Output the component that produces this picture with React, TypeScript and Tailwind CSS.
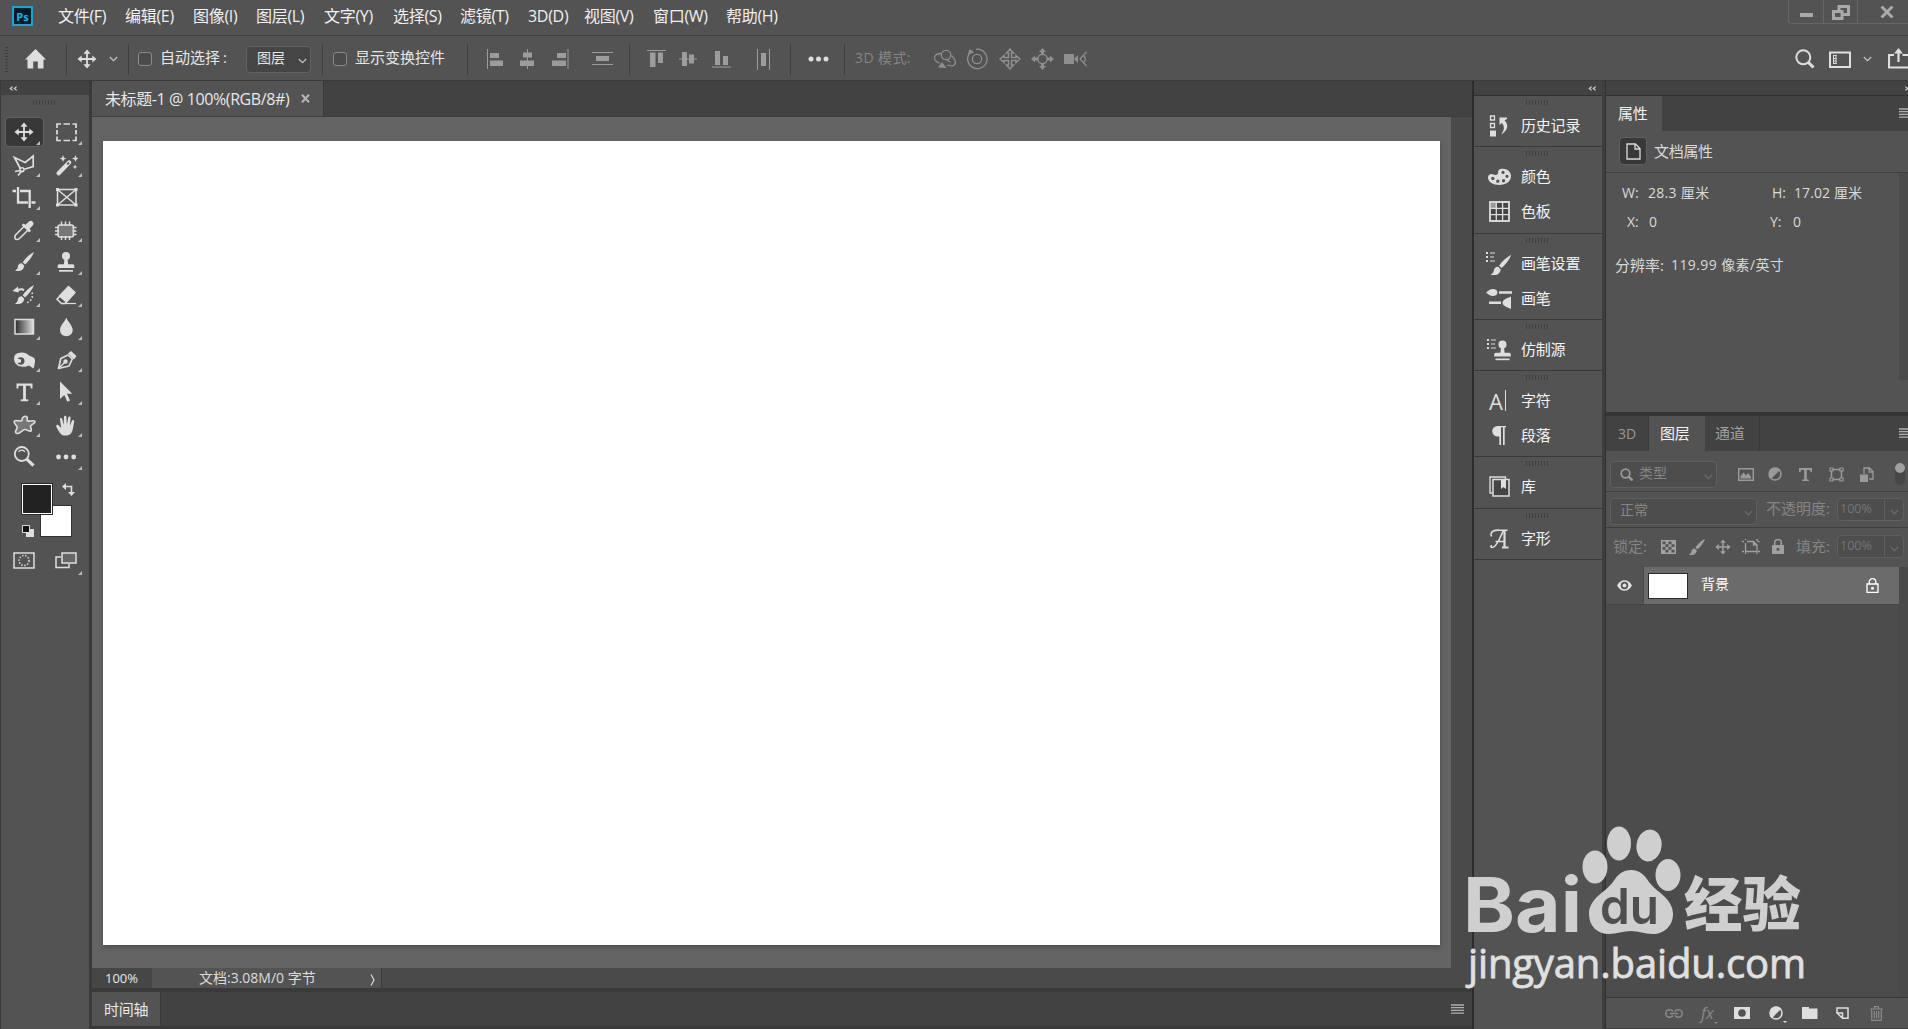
import type { ReactNode } from "react";
import clsx from "clsx";

interface SvgProps {
  w?: number;
  h?: number;
  className?: string;
  children: ReactNode;
}

// outline icon on its own pixel grid
const Svg = ({ w = 24, h = 24, className, children }: SvgProps) => (
  <svg
    width={w}
    height={h}
    viewBox={`0 0 ${w} ${h}`}
    fill="none"
    stroke="currentColor"
    strokeWidth="1.5"
    className={clsx("shrink-0", className)}
  >
    {children}
  </svg>
);

const Solid = ({ w = 24, h = 24, className, children }: SvgProps) => (
  <svg
    width={w}
    height={h}
    viewBox={`0 0 ${w} ${h}`}
    fill="currentColor"
    className={clsx("shrink-0", className)}
  >
    {children}
  </svg>
);

const Chevron = ({ className }: { className?: string }) => (
  <Svg w={9} h={6} className={className}>
    <path d="M.8 1l3.7 3.6L8.200 1" strokeWidth="1.2" />
  </Svg>
);

const MovePath = () => (
  <path d="M12 2.500l3.600 4.200h-2.700v4.400h4.400V8.400L21.500 12l-4.200 3.600v-2.700h-4.400v4.400h2.700L12 21.500l-3.600-4.200h2.700v-4.400H6.700v2.700L2.500 12l4.200-3.600v2.700h4.400V6.700H8.400z" />
);

const BrushPath = () => (
  <>
    <path d="M22 2c-4.500 2.200-8.600 6.300-11.300 10.200l2.400 2.200C16.600 11.200 20.300 6.700 22 2z" />
    <path d="M9.800 13.200c-2.800 0-3.700 1.700-4 3.700-.3 1.800-1.200 2.700-3 3.600 3.600 1.300 8.700.5 9.500-4.800z" />
  </>
);

const StampPath = () => (
  <>
    <circle cx="12" cy="6" r="4" />
    <path d="M10.500 9h3l.6 5.200h4.600c1 0 1.600.8 1.600 1.700V18H3.700v-2.100c0-.9.700-1.700 1.600-1.700h4.600z" />
    <path d="M5 20h14v1.700H5z" />
  </>
);

const Hamburger = ({ className }: { className?: string }) => (
  <Svg w={13} h={10} className={className}>
    <path d="M0 1h13M0 3.700h13M0 6.400h13M0 9.100h13" strokeWidth="1.300" />
  </Svg>
);

const Gripper = () => (
  <Solid w={24} h={5} className="text-[#404040]">
    <path d="M0 0h1v5H0zM3 0h1v5H3zM6 0h1v5H6zM9 0h1v5H9zM12 0h1v5h-1zM15 0h1v5h-1zM18 0h1v5h-1zM21 0h1v5h-1z" />
  </Solid>
);

const Collapse = ({ className }: { className?: string }) => (
  <Solid w={8} h={7} className={className}>
    <path d="M3.600 1v1.500L2.300 3.500l1.300 1V6L.3 3.500zM7.600 1v1.500L6.300 3.500l1.300 1V6L4.300 3.500z" />
  </Solid>
);

/* ---------- menu bar ---------- */

const menus = [
  { label: "文件(F)", width: "w-[67px]" },
  { label: "编辑(E)", width: "w-[68px]" },
  { label: "图像(I)", width: "w-[63px]" },
  { label: "图层(L)", width: "w-[68px]" },
  { label: "文字(Y)", width: "w-[69px]" },
  { label: "选择(S)", width: "w-[67px]" },
  { label: "滤镜(T)", width: "w-[68px]" },
  { label: "3D(D)", width: "w-[56px]" },
  { label: "视图(V)", width: "w-[69px]" },
  { label: "窗口(W)", width: "w-[73px]" },
  { label: "帮助(H)", width: "w-[70px]" },
];

const MenuBar = () => (
  <div className="flex h-[36px] items-start border-b border-[#3d3d3d]">
    <div className="ml-[12px] mt-[6px] flex h-5 w-[21px] items-center justify-center border-2 border-[#1ba3cf] bg-[#001c26] text-[11px] font-bold leading-none text-[#19b4ee]">
      Ps
    </div>
    <div className="ml-[25px] flex h-[32px] items-center text-[16px] tracking-[-0.3px] text-[#f0f0f0]">
      {menus.map((m) => (
        <span key={m.label} className={clsx("whitespace-nowrap", m.width)}>
          {m.label}
        </span>
      ))}
    </div>
    {/* window buttons */}
    <div className="ml-auto flex h-6 w-[120px] rounded-bl border-b border-l border-[#666] text-[#a9a9a9]">
      <div className="flex w-[35px] justify-center border-r border-[#666]">
        <div className="mt-[13px] h-1 w-[13px] bg-[#a9a9a9]" />
      </div>
      <div className="flex w-[34px] justify-center border-r border-[#666]">
        <Svg w={18} h={15} className="mt-[5px]">
          <path d="M7 7V1.500h9.500V9.500H11M1.500 6.500H10v7H1.500z" strokeWidth="3" />
        </Svg>
      </div>
      <Svg w={14} h={12} className="ml-[22px] mt-[6px]">
        <path d="M1.500.5l11 11M12.500.5l-11 11" strokeWidth="3" />
      </Svg>
    </div>
  </div>
);

/* ---------- options bar ---------- */

const Divider = ({ className }: { className: string }) => (
  <div className={clsx("h-[31px] w-px shrink-0 bg-[#3e3e3e]", className)} />
);

const Checkbox = ({ className }: { className: string }) => (
  <div
    className={clsx(
      "h-[14px] w-[14px] shrink-0 rounded-[3px] border border-[#8a8a8a] bg-[#4b4b4b]",
      className,
    )}
  />
);

const OptionsBar = () => (
  <div className="flex h-[44px] items-center whitespace-nowrap pt-[2px] text-[15px] text-[#e6e6e6]">
    <Svg w={3} h={25} className="ml-[5px] text-[#3e3e3e]">
      <path d="M1.500 0v25" strokeWidth="3" strokeDasharray="1 2" />
    </Svg>
    <Solid w={21} h={20} className="ml-[17px] text-[#dedede]">
      <path d="M10.500 0L21 10.600h-2.500V19.500h-5.700v-7H8.200v7H2.500v-8.900H0z" />
    </Solid>
    <Divider className="ml-[20px]" />
    <Solid className="ml-[8px] text-[#dedede]">
      <MovePath />
    </Solid>
    <Chevron className="ml-[10px] text-[#c4c4c4]" />
    <Divider className="ml-[10px]" />
    <Checkbox className="ml-[9px]" />
    <span className="ml-[8px] w-[86px] pb-[3px]">
      自动选择<span className="ml-[3px]">:</span>
    </span>
    <div className="flex h-[27px] w-[65px] items-center rounded border border-[#636363] bg-[#454545] pl-[10px] text-[14px]">
      <span className="w-[41px] pb-[3px]">图层</span>
      <Chevron className="mt-1 text-[#c4c4c4]" />
    </div>
    <Divider className="ml-[11px]" />
    <Checkbox className="ml-[10px]" />
    <span className="ml-[8px] w-[112px] pb-[3px]">显示变换控件</span>
    <Divider className="" />
    <div className="flex w-[161px] items-center text-[#9c9c9c]">
      <Solid w={17} h={20} className="ml-[19px]">
        <path d="M0 0h1v20H0zM3 4h9v5H3zM3 11.500h13v5.500H3z" />
      </Solid>
      <Solid w={15} h={20} className="ml-[16px]">
        <path d="M7 0h1v20H7zM3 3.500h9v5H3zM0 11.500h14v5.500H0z" />
      </Solid>
      <Solid w={17} h={20} className="ml-[17px]">
        <path d="M15.500 0h1v20h-1zM5 4h9v5H5zM0 11.500h14v5.500H0z" />
      </Solid>
      <Solid w={21} h={14} className="ml-[23px]">
        <path d="M0 0h21v1H0zM4 4h13v5H4zM0 12h21v1H0z" />
      </Solid>
    </div>
    <Divider className="" />
    <div className="flex w-[160px] items-center text-[#9c9c9c]">
      <Solid w={19} h={18} className="ml-[17px]">
        <path d="M0 0h19v1H0zM3 2.500h5.500V17H3zM11 2.500h5V13h-5z" />
      </Solid>
      <Solid w={18} h={18} className="ml-[13px]">
        <path d="M0 8.500h18v1H0zM3 2h5v14H3zM10 4.500h5v9h-5z" />
      </Solid>
      <Solid w={19} h={18} className="ml-[15px]">
        <path d="M0 16.500h19v1H0zM3 1h5v14H3zM11 6h5v9h-5z" />
      </Solid>
      <Solid w={13} h={21} className="ml-[26px]">
        <path d="M0 0h1v21H0zM4 4h5v13H4zM12 0h1v21h-1z" />
      </Solid>
    </div>
    <Divider className="" />
    <Solid w={21} h={6} className="ml-[17px] text-[#dedede]">
      <circle cx="3" cy="3" r="2.500" />
      <circle cx="10.500" cy="3" r="2.500" />
      <circle cx="18" cy="3" r="2.500" />
    </Solid>
    <Divider className="ml-[15px]" />
    <span className="ml-[10px] w-[78px] pb-[3px] text-[14px] tracking-[0.4px] text-[#858585]">3D 模式:</span>
    <div className="flex items-center text-[#8f8f8f]">
      <Svg w={24} h={20}>
        <circle cx="13" cy="6" r="4.700" strokeWidth="1.300" />
        <path
          d="M8 4.500C2.500 4.500.5 7.500 2 11c.8 1.600 2.500 2.500 4.500 3.200M18.500 6.500c4 3.500 5.200 8.500 2.300 9.800-2 .8-4.500.5-6.800-.3M14 11l3.500 2"
          strokeWidth="1.300"
        />
        <path d="M5 18.500l4-5.500 4.500 6z" fill="currentColor" stroke="none" />
      </Svg>
      <Svg w={22} h={22} className="ml-[9px]">
        <path d="M6.500 2.500A9.700 9.700 0 1 0 10 1.300M1.500 11.500c0-2 .5-4 1.700-5.500" strokeWidth="1.300" />
        <circle cx="11" cy="11" r="4.700" strokeWidth="1.300" />
        <path d="M2 6.500L3.500 1l4.500 3.500z" fill="currentColor" stroke="none" />
      </Svg>
      <Svg w={22} h={22} className="ml-[11px]">
        <path d="M11 1l3.500 4h-2v4.500H17v-2l4 3.500-4 3.500v-2h-4.500V17h2L11 21l-3.500-4h2v-4.500H5v2L1 11l4-3.500v2h4.500V5h-2z" />
      </Svg>
      <Svg w={23} h={22} className="ml-[10px]">
        <circle cx="11.500" cy="11" r="4.700" />
        <path
          d="M11.500 0l3.500 4h-2v2.500h-3V4H8zM11.500 22L8 18h2v-3h3v3h2zM0 11l4-3.500v2h3v3H4v2zM23 11l-4 3.500v-2h-3v-3h3v-2z"
          fill="currentColor"
          stroke="none"
        />
      </Svg>
      <Svg w={24} h={16} className="ml-[10px]">
        <path d="M0 3h10v10H0zM10 8l4-4v8z" fill="currentColor" stroke="none" />
        <path d="M22.500 1L16 8l6.500 7M19.500 4.500c2.500 2 2.500 5 0 7" strokeWidth="1.200" />
      </Svg>
    </div>
    <div className="ml-auto flex items-center text-[#dedede]">
      <Svg w={20} h={20}>
        <circle cx="8.300" cy="8.300" r="7" strokeWidth="2" />
        <path d="M13 13l5.500 5.500" strokeWidth="3" />
      </Svg>
      <Svg w={22} h={17} className="ml-[14px] mt-[1px]">
        <path d="M1 1.500h20v14.500H1z" strokeWidth="2" />
        <path d="M4.500 4v9M7 4v9M4.500 4.500h3M4.500 7.500h3M4.500 10h3M4.500 12.500h3" strokeWidth="1" />
      </Svg>
      <Chevron className="ml-[12px] text-[#c4c4c4]" />
      <Svg w={20} h={21} className="ml-[16px] mb-[2px]">
        <path d="M6 7H1v12.500h19M14.500 7H20M10.500 14V4" strokeWidth="2.200" />
        <path d="M10.500 0l4.500 5.500H6z" fill="currentColor" stroke="none" />
      </Svg>
    </div>
  </div>
);

/* ---------- toolbox ---------- */

const tools: { name: string; icon: ReactNode; more?: boolean }[] = [
  {
    name: "move",
    icon: (
      <Solid>
        <MovePath />
      </Solid>
    ),
  },
  {
    name: "marquee",
    icon: (
      <Svg>
        <path
          d="M3 8V4h4M18.500 4H22v4M22 16.500v4h-3.500M7 20.500H3v-4M9.500 4H16M9.500 20.500H16M3 10v4.500M22 10v4.500"
          strokeWidth="1.700"
        />
      </Svg>
    ),
  },
  {
    name: "lasso",
    icon: (
      <Svg>
        <path d="M8.300 15.500L2.500 4.500l10.700 5 8-6.500V13.500l-9 2.800" strokeWidth="1.700" />
        <circle cx="10" cy="16.800" r="2" />
        <path d="M3 18.500l5.500-1M8.500 18.500L11.500 18M9 18.800L6 22.500" strokeWidth="1.700" />
      </Svg>
    ),
  },
  {
    name: "wand",
    icon: (
      <Solid>
        <path d="M2.800 19L14 7.700c1.500-1.300 4.300 1.200 3 2.900L6 22c-1.800 1.600-4.600-1.200-3.200-3z" />
        <path d="M9 2l1 2.700 2.500.8L10 6.400 9 9 8 6.400l-2.500-.9L8 4.700zM21.500 2l1 2.700 2.500.8-2.500.9-1 2.600-1-2.600-2.500-.9 2.500-.8zM21 11.500l.7 1.800 1.800.7-1.800.6-.7 1.900-.7-1.900-1.800-.6 1.800-.7z" />
        <path d="M12.700 10.800l1.700-1.700 1.300 1.200-1.800 1.700z" fill="#535353" />
      </Solid>
    ),
  },
  {
    name: "crop",
    icon: (
      <Svg>
        <path d="M6 2v15.500h10M19.500 17.500H23.500M.5 6H4M8 6h9.700v17" strokeWidth="2.300" />
      </Svg>
    ),
  },
  {
    name: "frame",
    more: false,
    icon: (
      <Svg>
        <path d="M3.500 4.500h18.500v15.500H3.500zM3.500 4.500L22 20M22 4.500L3.500 20" />
        <path
          d="M2 3h3v3H2zM20.500 3h3v3h-3zM2 18.500h3v3H2zM20.500 18.500h3v3h-3z"
          fill="currentColor"
          stroke="none"
        />
      </Svg>
    ),
  },
  {
    name: "eyedropper",
    icon: (
      <Svg>
        <path d="M12 8.500L3.500 17c-1.200 1.800-.7 4.500 1 4.500 1.300.2 2.400-.3 3.300-1.200l8-8" strokeWidth="1.600" />
        <path
          d="M9.500 7l2-1.500 2 1.300L17 3.500c2-2 5.800.8 4 3.800l-3.500 3.500 1.500 2-1.700 1.700z"
          fill="currentColor"
          stroke="none"
        />
      </Svg>
    ),
  },
  {
    name: "patch",
    icon: (
      <Svg>
        <rect x="4" y="7" width="15.500" height="12" rx="2" fill="#777" />
        <path d="M7.500 3.500V8M11.500 3.500V8M15.500 3.500V8M7.500 18v4M11.500 18v4M15.500 18v4M1 9.500h4M1 13h4M1 16.500h4M18.500 9.500h4M18.500 13h4M18.500 16.500h4" />
      </Svg>
    ),
  },
  {
    name: "brush",
    icon: (
      <Solid>
        <BrushPath />
      </Solid>
    ),
  },
  {
    name: "stamp",
    icon: (
      <Solid>
        <StampPath />
      </Solid>
    ),
  },
  {
    name: "history-brush",
    icon: (
      <Solid>
        <BrushPath />
        <path d="M.5 8L6 3.500l.3 2.300c2.500-.9 5-.6 6.200.7l-1 1.500C10 7 8 7 6.600 8v1.500z" />
        <path
          d="M20 9.500c1.300 4.500-.5 8.500-5.500 10.500"
          fill="none"
          stroke="currentColor"
          strokeWidth="1.600"
          strokeDasharray="1.600 2"
        />
      </Solid>
    ),
  },
  {
    name: "eraser",
    icon: (
      <Svg>
        <path
          d="M14.500 3.500l6.500 6-8.500 9.500L5.500 13z"
          fill="currentColor"
          stroke="currentColor"
          strokeLinejoin="round"
        />
        <path d="M6 13l-3 3.300 4.500 4.200H11l2-2.500" strokeWidth="1.600" />
        <path d="M7 20.500h15" strokeWidth="1.200" />
      </Svg>
    ),
  },
  {
    name: "gradient",
    icon: (
      <Svg>
        <defs>
          <linearGradient id="ramp">
            <stop offset="0" stopColor="#2b2b2b" />
            <stop offset="1" stopColor="#dedede" />
          </linearGradient>
        </defs>
        <rect x="3" y="4.500" width="18.500" height="14.500" fill="url(#ramp)" />
      </Svg>
    ),
  },
  {
    name: "blur",
    icon: (
      <Solid>
        <path d="M12.300 2.500c1.200 4 6.400 8 6.400 12.500 0 3.800-2.900 6.200-6.400 6.200S6 18.800 6 15c0-4.500 5.100-8.500 6.300-12.500z" />
      </Solid>
    ),
  },
  {
    name: "sponge",
    icon: (
      <Solid>
        <path
          fillRule="evenodd"
          d="M3 7c4-3.500 11-3 14 .5 2.500 1 6 2 6 4.500 0 2-.5 6-1.500 8.500L17 17.500c-4 2-10 1.500-12.500-1-2-2-3.500-6-1.500-9.500zm5.800 2.300a3.700 3.700 0 1 0 0 7.400 3.700 3.700 0 0 0 0-7.400z"
        />
        <path d="M3 10l6 1.500v3L4 15z" />
      </Solid>
    ),
  },
  {
    name: "pen",
    icon: (
      <Svg>
        <path d="M4.500 20.500l2.300-10 7.200-3.500 4.300 4-3.300 7z" strokeLinejoin="round" strokeWidth="1.700" />
        <path d="M5 20l6-6" />
        <circle cx="11.500" cy="13.500" r="1.500" fill="currentColor" />
        <path d="M14 5.500L17 3l5.500 5-2.500 3.500z" fill="currentColor" stroke="none" />
      </Svg>
    ),
  },
  {
    name: "type",
    icon: (
      <Solid>
        <path d="M4.500 3.500h16V8.500h-1.700l-.5-2.700h-4.400v13.400l2.400.4v1.600H8.700v-1.600l2.400-.4V5.800H6.700l-.5 2.700H4.500z" />
      </Solid>
    ),
  },
  {
    name: "select",
    icon: (
      <Solid>
        <path d="M6 1.500l12.300 12.300h-5.300l3 6.700-2.700 1.200-3-6.800L6 19z" />
      </Solid>
    ),
  },
  {
    name: "shape",
    icon: (
      <Svg>
        <path
          d="M10 7.500C9.500 4.500 13 2 15 4c1 1.500-.5 3.500.4 4 1.500.6 6.800-1.300 7.600.5.700 2-4.500 3-4.500 5 .2 1.700 1.500 3 .5 4.500-2 1.200-4-2-6.500-1.500-2.500.6-4.500 4.700-7.500 4-3.500-1 .3-4.500.2-6.300C5 12 1 10.500 2.500 8 4 6 9 9.500 10 7.500z"
          fill="#777"
          strokeWidth="1.600"
        />
      </Svg>
    ),
  },
  {
    name: "hand",
    icon: (
      <Solid>
        <path d="M8 22c-2.500-1.800-4.500-6-5.700-8.300-.7-1.700 1.200-2.500 2.300-1.400l2.600 2.600L6 6.500c-.1-1.700 2-1.900 2.300-.3L9.600 12l.4-8c.1-1.700 2.300-1.700 2.400 0l.5 8 1.300-7.500c.3-1.600 2.500-1.300 2.400.3L16 12.700l2-5c.6-1.400 2.500-.8 2.200.7-.8 3.600-.9 8.600-3 11.800-1.800 2.400-6.200 2.800-9.200 1.800z" />
      </Solid>
    ),
  },
  {
    name: "zoom",
    more: false,
    icon: (
      <Svg>
        <circle cx="9.800" cy="9" r="7" strokeWidth="1.800" />
        <path d="M6.500 7c1.500-2.500 5-2.500 6.500 0" strokeWidth="1.200" />
        <path d="M15 14.300l6.500 6.400" strokeWidth="3.200" />
      </Svg>
    ),
  },
  {
    name: "more",
    icon: (
      <Solid>
        <circle cx="4.500" cy="12" r="2.400" />
        <circle cx="12" cy="12" r="2.400" />
        <circle cx="19.700" cy="12" r="2.400" />
      </Solid>
    ),
  },
];

const Corner = () => (
  <Solid w={4} h={4} className="absolute bottom-[4px] right-[5px] text-[#bdbdbd]">
    <path d="M4 0v4H0z" />
  </Solid>
);

const Toolbox = () => (
  <div className="flex w-[92px] shrink-0 flex-col border-l border-r-[3px] border-[#3a3a3a] bg-[#535353]">
    <div className="flex h-[14px] items-center bg-[#424242] pl-[8px] text-[#d0d0d0]">
      <Collapse />
    </div>
    <div className="flex h-[21px] items-center justify-center">
      <div className="mb-[7px]">
        <Gripper />
      </div>
    </div>
    <div className="ml-[2px] grid w-[84px] grid-cols-2 auto-rows-[32.5px] text-[#dedede]">
      {tools.map((t, i) => (
        <div key={t.name} className="relative flex items-center justify-center">
          <div
            className={clsx(
              "flex h-[30px] w-[39px] items-center justify-center rounded-sm",
              i === 0 && "border border-[#616161] bg-[#383838]",
            )}
          >
            {t.icon}
          </div>
          {t.more !== false && <Corner />}
        </div>
      ))}
    </div>
    {/* foreground / background colors */}
    <div className="relative ml-[20px] mt-[9px] h-[54px] w-[54px]">
      <div className="absolute bottom-0 right-[3px] box-content h-[30px] w-[30px] border border-[#333] bg-white" />
      <div className="absolute left-0 top-0 h-8 w-8 border border-[#2a2a2a] bg-white p-px">
        <div className="h-full w-full bg-[#222]" />
      </div>
      <Svg w={13} h={13} className="absolute right-0 top-0 text-[#dedede]">
        <path d="M2 3.500h7.500V11" strokeWidth="1.600" />
        <path d="M0 3.500L4 0v7zM9.500 13L6 9h7z" fill="currentColor" stroke="none" />
      </Svg>
      <Svg w={12} h={12} className="absolute bottom-0 left-[1px]">
        <path d="M4 4h8v8H4z" fill="#dedede" stroke="none" />
        <path d="M.5.5h7v7h-7z" fill="#111" stroke="#dedede" strokeWidth="1" />
      </Svg>
    </div>
    <div className="ml-[2px] mt-[8px] grid h-[32px] w-[84px] grid-cols-2 text-[#dedede]">
      <div className="flex items-center justify-center">
        <Svg w={22} h={17}>
          <path d="M1 1h20v15H1z" />
          <circle cx="11" cy="8.500" r="5" strokeDasharray="1.500 1.500" />
        </Svg>
      </div>
      <div className="relative flex items-center justify-center">
        <Svg w={22} h={17}>
          <path d="M7 1h14v10H7z" fill="#666" />
          <path d="M6 5H1v10.500h13V12" />
        </Svg>
        <Solid w={4} h={4} className="absolute bottom-[2px] right-[5px] text-[#bdbdbd]">
          <path d="M4 0v4H0z" />
        </Solid>
      </div>
    </div>
  </div>
);

/* ---------- document window ---------- */

const DocumentArea = () => (
  <div className="flex w-[1380px] shrink-0 flex-col bg-[#3a3a3a] text-[#e8e8e8]">
    <div className="flex h-[36px] border-b border-[#3d3d3d] bg-[#424242]">
      <div className="flex w-[232px] items-center whitespace-nowrap border-r border-[#3a3a3a] bg-[#535353] pl-[13px] text-[16px]">
        <span className="w-[196px] tracking-[-0.4px]">未标题-1 @ 100%(RGB/8#)</span>
        <Svg w={9} h={9} className="text-[#b5b5b5]">
          <path d="M1 .8l7 7.500M8 .8L1 8.300" strokeWidth="2" />
        </Svg>
      </div>
    </div>
    <div className="flex h-[851px]">
      <div className="w-[1359px] bg-[#646464] pl-[11px] pt-[24px]">
        <div className="h-[804px] w-[1337px] bg-white shadow-[0_2px_5px_#4c4c4c]" />
      </div>
      <div className="w-[21px] bg-[#4a4a4a]" />
    </div>
    <div className="flex h-5 items-center bg-[#4a4a4a]">
      <div className="flex h-full w-[60px] items-center bg-[#464646] pl-[13px] text-[13px]">100%</div>
      <div className="flex h-full w-[230px] items-center whitespace-nowrap border-r border-[#3d3d3d] bg-[#535353] pl-[47px] text-[14px] text-[#dcdcdc]">
        <span className="w-[171px]">文档:3.08M/0 字节</span>
        <Svg w={6} h={12} className="mt-1">
          <path d="M1 .5L4 6 1 11.500" strokeWidth="1.200" />
        </Svg>
      </div>
    </div>
    <div className="mt-1 flex h-[36px] border-b-2 border-[#3a3a3a] bg-[#424242]">
      <div className="flex w-[69px] items-center border-r border-[#3a3a3a] bg-[#535353] pl-[12px] text-[15px] tracking-[-0.3px]">
        时间轴
      </div>
      <Hamburger className="ml-auto mr-[8px] mt-[12px] text-[#b0b0b0]" />
    </div>
  </div>
);

/* ---------- collapsed panel column ---------- */

const ListDots = () => (
  <path d="M0 0h2v2H0zM0 4h2v2H0zM0 8h2v2H0zM4 .5h5v1H4zM4 4.500h4v1H4zM4 8.500h5v1H4z" />
);

interface Group {
  height: string;
  items: { label: string; icon: ReactNode }[];
}

const groups: Group[] = [
  {
    height: "h-[51px]",
    items: [
      {
        label: "历史记录",
        icon: (
          <Svg w={20} h={22}>
            <path d="M1.500 1h4v4h-4zM1.500 8.500h4v4h-4z" strokeWidth="1.300" />
            <path d="M1 15.500h6v6H1z" fill="currentColor" stroke="none" />
            <path
              d="M10.500 2.500h7.500v1.500l-2.500 1.300c4.500 4.500 3.500 10.500-3.500 14.200 3.500-4.500 4-8 .8-11.500L10.500 10z"
              fill="currentColor"
              stroke="none"
            />
          </Svg>
        ),
      },
    ],
  },
  {
    height: "h-[87px]",
    items: [
      {
        label: "颜色",
        icon: (
          <Solid w={23} h={18}>
            <path
              fillRule="evenodd"
              d="M12 1c6-1.500 11 2 11 7 0 5.500-5 9-11.500 9S0 14 0 9.500C0 6.500 3 5 5.500 6.500c2 1 4.500.5 4.500-1.500 0-1.500.5-3.500 2-4zM4.800 8.700a1.700 1.700 0 1 0 0 3.400 1.700 1.700 0 0 0 0-3.400zm5 2.800a1.700 1.700 0 1 0 0 3.400 1.700 1.700 0 0 0 0-3.400zm5.700-.5a1.700 1.700 0 1 0 0 3.400 1.700 1.700 0 0 0 0-3.400zm3.500-4.300a1.600 1.600 0 1 0 0 3.200 1.600 1.600 0 0 0 0-3.200zM15 2.800A1.600 1.600 0 1 0 15 6a1.600 1.600 0 0 0 0-3.200z"
            />
          </Solid>
        ),
      },
      {
        label: "色板",
        icon: (
          <Svg w={21} h={21}>
            <path d="M1 1h19v19H1z" fill="#444" />
            <path d="M1 1h6v6H1z" fill="#999" stroke="none" />
            <path d="M1 1h19v19H1zM7.300 1v19M13.600 1v19M1 7.300h19M1 13.600h19" strokeWidth="1.300" />
          </Svg>
        ),
      },
    ],
  },
  {
    height: "h-[86px]",
    items: [
      {
        label: "画笔设置",
        icon: (
          <Solid w={26} h={23}>
            <ListDots />
            <g transform="translate(1.500 .5) scale(1.080)">
              <BrushPath />
            </g>
          </Solid>
        ),
      },
      {
        label: "画笔",
        icon: (
          <Solid w={26} h={20}>
            <path d="M0 3.500C3 1 4.500 0 7 0c2.500 0 4.500 1.500 4.500 3.500S9.500 7 7 7C4.500 7 3 6 0 3.500zM13 2.200h13v2.600H13zM3 12.500h12v2.600H3zM16.500 13.800C17 10 21 9.500 25 7.500v12.500c-4-2-8-2.500-8.500-6.200z" />
          </Solid>
        ),
      },
    ],
  },
  {
    height: "h-[51px]",
    items: [
      {
        label: "仿制源",
        icon: (
          <Solid w={25} h={22}>
            <ListDots />
            <g transform="translate(3.500 -.5)">
              <StampPath />
            </g>
          </Solid>
        ),
      },
    ],
  },
  {
    height: "h-[86px]",
    items: [
      {
        label: "字符",
        icon: (
          <div className="flex w-[20px] items-center text-[22px] leading-none">
            A<div className="ml-[2px] h-[21px] w-[1.5px] shrink-0 bg-[#dedede]" />
          </div>
        ),
      },
      {
        label: "段落",
        icon: (
          <Solid w={14} h={19}>
            <path d="M5.500 0H14v1.200h-1.300V19h-1.700V1.200H9V19H7.300V10.500H5.500a5.200 5.200 0 1 1 0-10.500z" />
          </Solid>
        ),
      },
    ],
  },
  {
    height: "h-[52px]",
    items: [
      {
        label: "库",
        icon: (
          <Svg w={21} h={21}>
            <path d="M3.500 17H1V1h15.500v2" strokeWidth="1.300" />
            <path d="M4 3.500h16v16.500H4z" fill="#444" />
            <path d="M12 4h5v9l-2.500-2L12 13z" fill="currentColor" stroke="none" />
          </Svg>
        ),
      },
    ],
  },
  {
    height: "h-[51px]",
    items: [
      {
        label: "字形",
        icon: (
          <Svg w={19} h={20}>
            <path d="M1.500 7.500C-.5 2 5 1 9 1.200h8.500M13.500 1.500C11 6 7 18 2.500 18.500c-2 .2-2-2-.5-2M5.500 12.500h9" strokeWidth="1.600" />
            <path d="M14.500 1.500V18M12 18.500h6.500" strokeWidth="2.200" />
          </Svg>
        ),
      },
    ],
  },
];

const IconPanels = () => (
  <div className="flex w-[133px] shrink-0 flex-col border-l-2 border-r-[3px] border-l-[#2c2c2c] border-r-[#3e3e3e] bg-[#535353]">
    <div className="flex h-[15px] items-center justify-end border-b border-[#303030] bg-[#424242] pr-[6px] text-[#d0d0d0]">
      <Collapse />
    </div>
    {groups.map((g) => (
      <div
        key={g.items[0].label}
        className={clsx("flex flex-col items-center border-b border-[#3a3a3a] pt-[4px]", g.height)}
      >
        <div className="mb-[3px]">
          <Gripper />
        </div>
        {g.items.map((item) => (
          <div key={item.label} className="flex h-[35px] w-full shrink-0 items-center text-[#dedede]">
            <div className="ml-[10px] flex w-[30px] items-center justify-center">{item.icon}</div>
            <span className="ml-[7px] pb-px text-[15px] tracking-[-0.2px] text-[#f4f4f4]">
              {item.label}
            </span>
          </div>
        ))}
      </div>
    ))}
  </div>
);

/* ---------- right side panels ---------- */

const Properties = () => (
  <div className="flex h-[316px] flex-col whitespace-nowrap text-[14px] text-[#dadada]">
    <div className="flex h-[35px] bg-[#424242]">
      <div className="flex w-[56px] items-center bg-[#535353] pl-[12px] pb-px text-[15px] tracking-[-0.3px] text-[#f4f4f4]">
        属性
      </div>
      <Hamburger className="-mr-1 ml-auto mt-[12px] text-[#b0b0b0]" />
    </div>
    <div className="flex h-[42px] items-center border-b border-[#3e3e3e] pl-[13px] pb-px text-[15px]">
      <div className="flex h-[28px] w-[28px] items-center justify-center rounded-sm border border-[#606060] bg-[#383838]">
        <Svg w={15} h={17}>
          <path d="M1 1h8.500L14 5.500V16H1zM9 1v5h5" strokeWidth="1.300" />
        </Svg>
      </div>
      <span className="ml-[7px] tracking-[-0.3px]">文档属性</span>
    </div>
    <div className="flex h-[207px]">
      <div className="w-[293px] pt-[10px]">
        <div className="flex h-5 items-center">
          <span className="w-[42px] pl-[16px]">W:</span>
          <span className="w-[124px] tracking-[0.3px]">28.3 厘米</span>
          <span className="w-[22px]">H:</span>
          <span className="tracking-[0.1px]">17.02 厘米</span>
        </div>
        <div className="mt-[9px] flex h-5 items-center">
          <span className="w-[43px] pl-[21px]">X:</span>
          <span className="w-[121px]">0</span>
          <span className="w-[23px]">Y:</span>
          <span>0</span>
        </div>
        <div className="mt-[23px] flex h-5 items-center pl-[9px]">
          <span className="w-[56px] text-[15px]">分辨率:</span>
          <span className="tracking-[0.4px]">119.99 像素/英寸</span>
        </div>
      </div>
      <div className="flex-1 bg-[#4a4a4a]" />
    </div>
  </div>
);

const Percent = () => (
  <div className="ml-auto mr-[4px] flex h-[23px] w-[67px] items-center rounded-sm border border-[#5f5f5f] bg-[#4d4d4d] text-[12.5px] text-[#757575]">
    <span className="flex h-full w-[47px] items-center border-r border-[#5f5f5f] pl-[2px] pb-px">100%</span>
    <Chevron className="ml-[5px] mt-1 text-[#6c6c6c]" />
  </div>
);

const Layers = () => (
  <div className="flex flex-1 flex-col whitespace-nowrap border-t-4 border-[#363636] text-[15px] text-[#a0a0a0]">
    <div className="flex h-[35px] bg-[#424242]">
      <div className="flex w-[43px] items-center border-r border-[#393939] pl-[12px] text-[14px] text-[#989898]">3D</div>
      <div className="flex w-[56px] items-center bg-[#535353] pl-[11px] tracking-[-0.3px] text-[#f4f4f4]">图层</div>
      <div className="flex w-[55px] items-center border-r border-[#393939] pl-[10px] tracking-[-0.3px]">通道</div>
      <Hamburger className="-mr-1 ml-auto mt-[12px] text-[#b0b0b0]" />
    </div>
    {/* filter */}
    <div className="flex h-[41px] items-center border-b border-[#3e3e3e] pl-[4px] pt-[9px] pb-[3px] text-[#9a9a9a]">
      <div className="mt-px flex h-[27px] w-[107px] items-center rounded border border-[#5f5f5f] bg-[#4d4d4d] pl-[9px] text-[14px] text-[#858585]">
        <Svg w={13} h={13} className="text-[#9a9a9a]">
          <circle cx="5.500" cy="5.500" r="4.300" strokeWidth="1.700" />
          <path d="M8.500 8.500l4 4" strokeWidth="2.300" />
        </Svg>
        <span className="ml-[6px] w-[65px] pb-[3px]">类型</span>
        <Chevron className="mt-1 text-[#6c6c6c]" />
      </div>
      <Svg w={16} h={13} className="ml-[21px]">
        <path d="M.7.7h14.600v11.600H.7z" />
        <path d="M2.500 10.500V8.500l3-4 2.500 3 2-2.500 3 4v1.500z" fill="currentColor" stroke="none" />
      </Svg>
      <Svg w={14} h={14} className="ml-[14px]">
        <circle cx="7" cy="7" r="6" />
        <path d="M2.800 11.200A6 6 0 0 1 11.200 2.800z" fill="currentColor" />
      </Svg>
      <Solid w={13} h={13} className="ml-[17px]">
        <path d="M0 0h13v4h-1.500L11 2H7.800v9.300l2 .4V13H3.200v-1.300l2-.4V2H2L1.500 4H0z" />
      </Solid>
      <Svg w={15} h={15} className="ml-[17px]">
        <path d="M2.500 2.500h10v10h-10z" />
        <path d="M1 1h3v3H1zM11 1h3v3h-3zM1 11h3v3H1zM11 11h3v3h-3z" fill="#535353" strokeWidth="1.200" />
      </Svg>
      <Svg w={14} h={15} className="ml-[16px]">
        <path d="M4 7V1h5.500L13 4.500V12H9M9 1v4h4" strokeWidth="1.300" />
        <path d="M0 7.500h8V15H0z" fill="currentColor" stroke="none" />
      </Svg>
      <div className="ml-[21px] h-[22px] w-[10px] rounded-full bg-[#474747]">
        <div className="h-[10px] w-[10px] rounded-full bg-[#a0a0a0]" />
      </div>
    </div>
    {/* blend mode */}
    <div className="flex h-[36px] items-center border-b border-[#3e3e3e] pl-[4px] text-[#858585]">
      <div className="mt-[3px] flex h-[27px] w-[147px] items-center rounded border border-[#5f5f5f] bg-[#4d4d4d] pl-[9px] text-[14px]">
        <span className="w-[124px] pb-[3px]">正常</span>
        <Chevron className="mt-1 text-[#6c6c6c]" />
      </div>
      <span className="ml-[9px] pb-[3px]">不透明度:</span>
      <Percent />
    </div>
    {/* lock row */}
    <div className="flex h-[39px] items-center pb-[2px] pl-[7px] text-[#a0a0a0]">
      <span className="w-[48px] text-[#858585]">锁定:</span>
      <Solid w={15} h={14}>
        <path
          fillRule="evenodd"
          d="M0 0h15v14H0zM1.500 1.500v2.700h3V1.500zM7.500 1.500v2.700h3V1.500zM4.500 4.200v2.800h3V4.200zM10.500 4.200v2.800h3V4.200zM1.500 7v2.700h3V7zM7.500 7v2.700h3V7zM4.500 9.700v2.800h3V9.700zM10.500 9.700v2.800h3V9.700z"
        />
      </Solid>
      <svg viewBox="2 1 21 21" fill="currentColor" className="ml-[12px] h-[18px] w-[18px]">
        <BrushPath />
      </svg>
      <svg viewBox="2 2 20 20" fill="currentColor" className="ml-[9px] h-[16px] w-[16px]">
        <MovePath />
      </svg>
      <Svg w={18} h={15} className="ml-[11px]">
        <path d="M0 2.500h2M3.500 0v1M5 2.500h6.500L15 6v6.500H3.500V4M11.500 2.500V6H15M15 0v2M17.500 2.500h-2M0 12.500h2M3.500 13.500V15M15 13.500V15M16 12.500h2" strokeWidth="1.300" />
      </Svg>
      <Svg w={12} h={15} className="ml-[12px]">
        <path d="M2.700 6V3.800a3.300 3.300 0 0 1 6.600 0V6" />
        <path fillRule="evenodd" d="M0 6h12v9H0zM6 8.700a1.500 1.500 0 1 0 0 3 1.500 1.500 0 0 0 0-3z" fill="currentColor" stroke="none" />
      </Svg>
      <span className="ml-[12px] text-[#858585]">填充:</span>
      <Percent />
    </div>
    {/* background layer */}
    <div className="flex min-h-0 flex-1 bg-[#4c4c4c]">
      <div className="w-[293px]">
        <div className="flex h-[38px] border-b border-[#444] bg-[#535353] text-[#dedede]">
          <div className="flex w-[38px] items-center justify-center border-r border-[#474747]">
            <Solid w={15} h={11}>
              <path
                fillRule="evenodd"
                d="M0 5.500C3.500-1.500 11.500-1.500 15 5.500c-3.500 7-11.500 7-15 0zM7.500 1.800a3.700 3.700 0 1 0 0 7.400 3.700 3.700 0 0 0 0-7.400z"
              />
              <circle cx="7.500" cy="5.500" r="2" />
            </Solid>
          </div>
          <div className="flex flex-1 items-center bg-[#6b6b6b] pl-[4px] text-[14px] text-white">
            <div className="h-[26px] w-[40px] border border-[#2c2c2c] bg-white" />
            <span className="ml-[13px] pb-[3px]">背景</span>
            <Svg w={13} h={15} className="ml-auto mr-[20px]">
              <path d="M1 6h11v8.300H1zM3.200 6V4a3.300 3.300 0 0 1 6.600 0v2" strokeWidth="1.300" />
              <circle cx="6.500" cy="10.200" r="1.500" fill="currentColor" stroke="none" />
            </Svg>
          </div>
        </div>
      </div>
      <div className="flex-1 bg-[#494949]" />
    </div>
    {/* panel actions */}
    <div className="flex h-[32px] items-center border-y border-[#3a3a3a] bg-[#535353] pl-[59px] text-[#dedede]">
      <Svg w={18} h={9} className="text-[#8a8a8a]">
        <path d="M8 2.500C7.300 1.300 6 .8 4.500.8a3.700 3.700 0 0 0 0 7.400C6 8.200 7.300 7.700 8 6.500M10 2.500C10.700 1.300 12 .8 13.500.8a3.700 3.700 0 0 1 0 7.400c-1.500 0-2.800-.5-3.500-1.700M5 4.500h8" />
      </Svg>
      <div className="ml-[18px] flex w-[20px] items-end text-[#8a8a8a]">
        <span className="text-[16px] italic">fx</span>
        <Solid w={4} h={2} className="mb-[-3px]">
          <path d="M0 0h4L2 2z" />
        </Solid>
      </div>
      <Solid w={16} h={12} className="ml-[13px]">
        <path fillRule="evenodd" d="M0 0h16v12H0zM8 2.200a3.800 3.800 0 1 0 0 7.600 3.800 3.800 0 0 0 0-7.600z" />
      </Solid>
      <Svg w={19} h={20} className="ml-[19px]">
        <circle cx="7" cy="10" r="6" />
        <path d="M2.800 14.200A6 6 0 0 1 11.200 5.800z" fill="currentColor" />
        <path d="M14 18h4l-2 2z" fill="currentColor" stroke="none" />
      </Svg>
      <Solid w={16} h={12} className="ml-[14px]">
        <path d="M0 0h7v1.500h8.500V12H0z" />
      </Solid>
      <Svg w={13} h={12} className="ml-[18px]">
        <path d="M1 6V1h11v10.300H6.500L1 6h5.500v5" />
      </Svg>
      <Svg w={13} h={15} className="ml-[21px] text-[#8a8a8a]">
        <path d="M0 3h13M4.500 3V.7h4V3M1.700 3v11.300h9.600V3M4.300 5v7.500M6.500 5v7.500M8.700 5v7.500" strokeWidth="1.200" />
      </Svg>
    </div>
  </div>
);

const Watermark = () => (
  <svg
    width="350"
    height="170"
    viewBox="1460 822 350 170"
    className="absolute left-[1460px] top-[822px]"
    fill="#cfcfcf"
  >
    <text
      x="1463"
      y="932"
      fontSize="76"
      fontWeight="700"
      textLength="119"
      lengthAdjust="spacingAndGlyphs"
      className="font-['Inter','Liberation_Sans',sans-serif]"
    >
      Bai
    </text>
    <ellipse cx="1595" cy="867" rx="12.500" ry="16.500" />
    <ellipse cx="1619" cy="843.500" rx="12" ry="17" />
    <ellipse cx="1649" cy="845.500" rx="12.500" ry="16" transform="rotate(10 1649 845.500)" />
    <ellipse cx="1668" cy="875" rx="12.500" ry="16" />
    <path d="M1631 870c8 0 13 4 18 12 7 10 24 16 24 32 0 12-9 20-20 20-9 0-14-3-22-3s-14 3-22 3c-12 0-20-8-20-20 0-16 17-22 24-32 5-8 10-12 18-12z" />
    <text
      x="1600"
      y="924"
      fontSize="49"
      fontWeight="600"
      fill="#4f4f4f"
      textLength="59"
      lengthAdjust="spacingAndGlyphs"
      className="font-['Inter','Liberation_Sans',sans-serif]"
    >
      du
    </text>
    <text
      x="1684"
      y="926"
      fontSize="59"
      fontWeight="900"
      textLength="117"
      lengthAdjust="spacingAndGlyphs"
      className="font-['Noto_Sans_CJK_SC',sans-serif]"
    >
      经验
    </text>
    <text
      x="1468"
      y="977.500"
      fontSize="40"
      fill="#e0e0e0"
      stroke="#e0e0e0"
      strokeWidth=".8"
      textLength="338"
      className="font-['Open_Sans',sans-serif]"
    >
      jingyan.baidu.com
    </text>
  </svg>
);

export default function App() {
  return (
    <div className="relative flex h-[1029px] w-[1908px] flex-col overflow-hidden bg-[#535353] font-['Open_Sans','Noto_Sans_CJK_SC',sans-serif] leading-none">
      <MenuBar />
      <OptionsBar />
      <div className="flex h-[949px] border-t border-[#3a3a3a]">
        <Toolbox />
        <DocumentArea />
        <IconPanels />
        <div className="flex w-[303px] shrink-0 flex-col border-l border-[#303030]">
          <div className="flex h-[15px] items-center justify-end border-b border-[#303030] bg-[#424242] text-[#d0d0d0]">
            <Collapse className="-mr-[5px] rotate-180" />
          </div>
          <Properties />
          <Layers />
        </div>
      </div>
      <Watermark />
    </div>
  );
}
